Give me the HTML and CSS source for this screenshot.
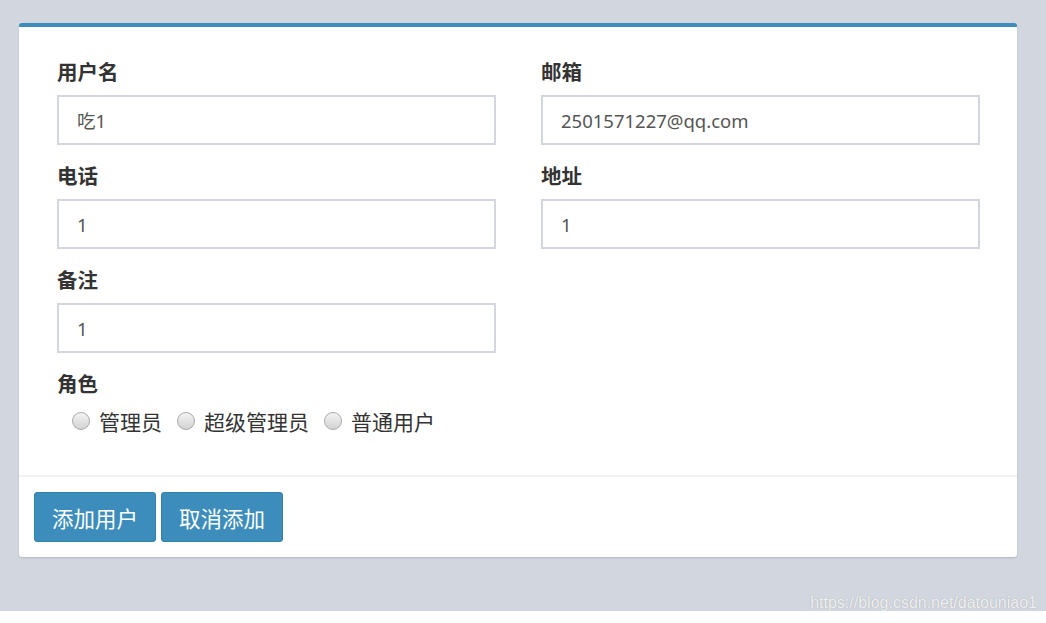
FILE: index.html
```html
<!DOCTYPE html>
<html lang="zh-CN">
<head>
    <meta charset="UTF-8">
    <title>添加用户</title>
    <link rel="stylesheet" href="styles.css">
</head>
<body>
    <div class="page">
        <div class="box">
            <div class="box-body">
                <div class="form-grid">
                    <div class="form-group">
                        <label>用户名</label>
                        <input type="text" class="form-control" value="吃1">
                    </div>
                    <div class="form-group">
                        <label>邮箱</label>
                        <input type="text" class="form-control" value="2501571227@qq.com">
                    </div>
                    <div class="form-group">
                        <label>电话</label>
                        <input type="text" class="form-control" value="1">
                    </div>
                    <div class="form-group">
                        <label>地址</label>
                        <input type="text" class="form-control" value="1">
                    </div>
                    <div class="form-group">
                        <label>备注</label>
                        <input type="text" class="form-control" value="1">
                    </div>
                </div>
                <div class="role-group">
                    <label>角色</label>
                    <div class="radios">
                        <span class="radio-item"><input type="radio" name="role">管理员</span>
                        <span class="radio-item"><input type="radio" name="role">超级管理员</span>
                        <span class="radio-item"><input type="radio" name="role">普通用户</span>
                    </div>
                </div>
            </div>
            <div class="box-footer">
                <button class="btn">添加用户</button>
                <button class="btn">取消添加</button>
            </div>
        </div>
        <div class="watermark">https://blog.csdn.net/datouniao1</div>
    </div>
</body>
</html>
```

FILE: styles.css
```css
body {
    margin: 0;
    background-color: #fff;
    font-family: "Noto Sans", "Noto Sans CJK SC", sans-serif;
}
.page {
    position: relative;
    height: 611px;
    background-color: #d2d6de;
    padding: 23px 0 0 19px;
    box-sizing: border-box;
}
.box {
    width: 998px;
    background-color: #fff;
    border-top: 4px solid #3c8dbc;
    border-radius: 3px;
    box-shadow: 0 1px 2px rgba(0, 0, 0, 0.15);
}
.box-body {
    padding: 30px 38px 40px;
}
.form-grid {
    display: grid;
    grid-template-columns: 439px 439px;
    column-gap: 45px;
}
.form-group {
    margin-bottom: 16px;
}
label {
    display: block;
    font-family: "Noto Sans CJK SC", sans-serif;
    font-weight: bold;
    font-size: 20.5px;
    line-height: 28px;
    color: #333;
    margin-bottom: 10px;
}
.form-control {
    display: block;
    width: 100%;
    height: 50px;
    box-sizing: border-box;
    border: 2px solid #d2d6de;
    padding: 0 18px;
    font-family: "Noto Sans", "Noto Sans CJK SC", sans-serif;
    font-size: 18.5px;
    color: #555;
    outline: none;
}
.radios {
    display: flex;
    align-items: center;
    height: 28px;
    padding-left: 15px;
    font-family: "Noto Sans CJK SC", sans-serif;
    font-size: 21px;
    color: #333;
}
.radio-item {
    display: flex;
    align-items: center;
    margin-right: 15px;
}
.radio-item input {
    appearance: none;
    -webkit-appearance: none;
    width: 18px;
    height: 18px;
    margin: 0 9px 0 0;
    border: 1px solid #a9a9a9;
    border-radius: 50%;
    background: linear-gradient(#f4f4f4, #d2d2d2);
    box-sizing: border-box;
}
.box-footer {
    border-top: 2px solid #f2f2f2;
    padding: 15px;
    display: flex;
    gap: 5px;
}
.btn {
    width: 122px;
    height: 50px;
    background-color: #3c8dbc;
    border: 1px solid #367fa9;
    border-radius: 3px;
    color: #fff;
    font-family: "Noto Sans CJK SC", sans-serif;
    font-size: 21.5px;
    cursor: pointer;
}
.watermark {
    position: absolute;
    right: 9px;
    bottom: -1px;
    font-family: "Liberation Sans", Arial, sans-serif;
    font-size: 16px;
    color: rgba(255, 255, 255, 0.85);
    text-shadow: 0 0 1px rgba(120, 120, 120, 0.6);
}
```
